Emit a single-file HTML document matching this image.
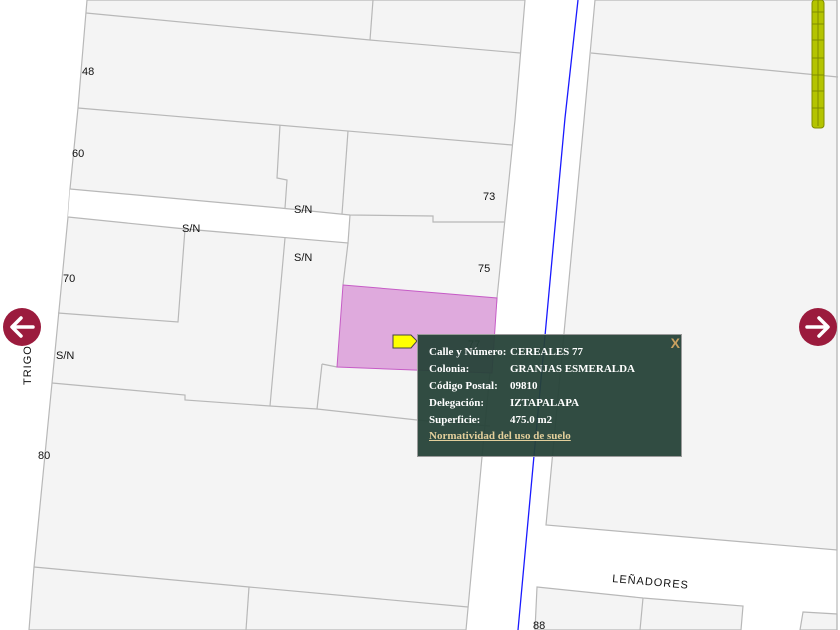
<!DOCTYPE html>
<html><head><meta charset="utf-8"><style>
html,body{margin:0;padding:0;width:840px;height:630px;overflow:hidden;background:#fff}
svg{position:absolute;left:0;top:0}
.pop{position:absolute;left:417px;top:334px;width:263px;height:121px;background:rgba(38,66,56,0.95);border:1px solid #9a9a9a;font-family:"Liberation Serif",serif;font-weight:bold;font-size:11px;color:#fff}
.pop .r{position:absolute;left:11px;white-space:nowrap}
.pop .v{position:absolute;left:81px}
.pop .x{position:absolute;right:1px;top:0px;color:#c8a060;font-family:"Liberation Sans",sans-serif;font-weight:bold;font-size:14px}
.pop a{color:#e3cf9b;text-decoration:underline}
</style></head><body>
<svg width="840" height="630" viewBox="0 0 840 630" font-family="Liberation Sans, sans-serif" font-size="11">
<g fill="#f4f4f4" stroke="#b8b8b8" stroke-width="1.2">
<polygon points="87,0 525,0 515,120 497,298 482,457 466,630 29,630 34,567 52,383 68,217 70,189 78,108"/>
<polygon points="595,0 837,0 837,550 546,525 584,120"/>
<polygon points="537,587 643,598 743,606 741,630 535,630"/>
<polygon points="803,612 837,614 837,630 800,630"/>
</g>
<polygon points="70,189 350,215 348,243 68,217" fill="#fff" stroke="none"/>
<g fill="none" stroke="#b8b8b8" stroke-width="1.2">
<polyline points="70,189 280,208 350,215 433,216 433,222 504,222"/>
<polyline points="68,217 185,229 348,243 350,215"/>
<polyline points="86,13 370,40 520,53"/>
<line x1="373" y1="0" x2="370" y2="40"/>
<polyline points="78,108 512,145"/>
<polyline points="280,125 277,178 287,180 285,208"/>
<polyline points="348,131 342,214"/>
<polyline points="185,229 178,322 58,313"/>
<polyline points="285,238 270,406"/>
<polyline points="348,243 343,285"/>
<polyline points="322,364 337,367"/>
<polyline points="322,364 317,409"/>
<polyline points="52,383 185,395 185,400 270,406 317,409 417,420 490,426"/>
<polyline points="34,567 249,587 468,607"/>
<line x1="249" y1="587" x2="246" y2="630"/>
<polyline points="591,53 838,77"/>
<line x1="643" y1="598" x2="640" y2="630"/>
<line x1="837" y1="0" x2="837" y2="630"/>
</g>
<polygon points="343,285 497,298 492,373 337,367" fill="#dfaadd" stroke="#c65cc6" stroke-width="1"/>
<polyline points="578,0 565,118 518,630" fill="none" stroke="#1a1aff" stroke-width="1.3"/>
<g fill="#111">
<text x="82" y="75">48</text><text x="72" y="157">60</text><text x="483" y="200">73</text>
<text x="294" y="213">S/N</text><text x="182" y="232">S/N</text><text x="294" y="261">S/N</text>
<text x="63" y="282">70</text><text x="478" y="272">75</text><text x="56" y="359">S/N</text>
<text x="38" y="459">80</text><text x="533" y="629">88</text><text x="468" y="348">77</text>
<text x="612" y="582" transform="rotate(5 612 582)" letter-spacing="1">LEÑADORES</text>
<text x="31" y="385" transform="rotate(-90 31 385)" letter-spacing="1">TRIGO</text>
</g>
<rect x="812" y="0" width="12" height="128" rx="3" fill="#b4c400" stroke="#7f8c00"/>
<g stroke="#7f8c00" stroke-width="1"><line x1="812" y1="12" x2="824" y2="12"/><line x1="812" y1="24" x2="824" y2="24"/><line x1="812" y1="40" x2="824" y2="40"/><line x1="812" y1="58" x2="824" y2="58"/><line x1="812" y1="75" x2="824" y2="75"/><line x1="812" y1="91" x2="824" y2="91"/><line x1="812" y1="108" x2="824" y2="108"/><line x1="818" y1="0" x2="818" y2="126"/></g>
<circle cx="22" cy="327" r="19" fill="#9b1b3d"/>
<path d="M33 327H13M21 318l-9 9 9 9" stroke="#fff" stroke-width="3.5" fill="none" stroke-linecap="round" stroke-linejoin="round"/>
<circle cx="818" cy="327" r="19" fill="#9b1b3d"/>
<path d="M807 327H827M819 318l9 9-9 9" stroke="#fff" stroke-width="3.5" fill="none" stroke-linecap="round" stroke-linejoin="round"/>
<polygon points="393,335 411,335 417,341 411,348 393,348" fill="#ffff00" stroke="#444" stroke-width="1"/>
</svg>
<div class="pop">
<div class="x">X</div>
<div class="r" style="top:11px">Calle y Número:<span class="v">CEREALES 77</span></div>
<div class="r" style="top:28px">Colonia:<span class="v">GRANJAS ESMERALDA</span></div>
<div class="r" style="top:45px">Código Postal:<span class="v">09810</span></div>
<div class="r" style="top:62px">Delegación:<span class="v">IZTAPALAPA</span></div>
<div class="r" style="top:79px">Superficie:<span class="v">475.0 m2</span></div>
<div class="r" style="top:95px"><a>Normatividad del uso de suelo</a></div>
</div>
</body></html>
